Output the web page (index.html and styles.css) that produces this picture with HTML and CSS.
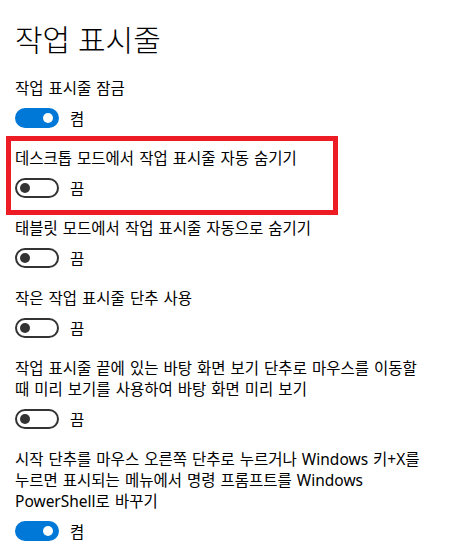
FILE: index.html
```html
<!DOCTYPE html>
<html lang="ko">
<head>
  <meta charset="UTF-8">
  <title>작업 표시줄</title>
  <link rel="stylesheet" href="styles.css">
</head>
<body>

  <main class="page">
    <h1 class="title">작업 표시줄</h1>

    <div class="settings">
      <div class="setting">
        <p class="label">작업 표시줄 잠금</p>
        <div class="switch-row">
          <span class="switch on"><span class="knob"></span></span>
          <span class="state">켬</span>
        </div>
      </div>

      <div class="setting highlight">
        <p class="label">데스크톱 모드에서 작업 표시줄 자동 숨기기</p>
        <div class="switch-row">
          <span class="switch"><span class="knob"></span></span>
          <span class="state">끔</span>
        </div>
      </div>

      <div class="setting">
        <p class="label">태블릿 모드에서 작업 표시줄 자동으로 숨기기</p>
        <div class="switch-row">
          <span class="switch"><span class="knob"></span></span>
          <span class="state">끔</span>
        </div>
      </div>

      <div class="setting">
        <p class="label">작은 작업 표시줄 단추 사용</p>
        <div class="switch-row">
          <span class="switch"><span class="knob"></span></span>
          <span class="state">끔</span>
        </div>
      </div>

      <div class="setting">
        <p class="label">작업 표시줄 끝에 있는 바탕 화면 보기 단추로 마우스를 이동할 때 미리 보기를 사용하여 바탕 화면 미리 보기</p>
        <div class="switch-row">
          <span class="switch"><span class="knob"></span></span>
          <span class="state">끔</span>
        </div>
      </div>

      <div class="setting">
        <p class="label">시작 단추를 마우스 오른쪽 단추로 누르거나 Windows 키+X를 누르면 표시되는 메뉴에서 명령 프롬프트를 Windows PowerShell로 바꾸기</p>
        <div class="switch-row">
          <span class="switch on"><span class="knob"></span></span>
          <span class="state">켬</span>
        </div>
      </div>
    </div>
  </main>

</body>
</html>
```

FILE: styles.css
```css
body { margin: 0; background: #fff; color: #000; font-family: "Noto Sans", "Noto Sans CJK KR", sans-serif; }
.page { width: 415px; padding: 22px 0 20px 15px; }
.title { margin: 0 0 20px; font-size: 30px; line-height: 36px; font-weight: 300; }
.settings { display: flex; flex-direction: column; gap: 20px; }
.setting { display: flex; flex-direction: column; }
.label { margin: 0; font-size: 15.5px; line-height: 21px; word-spacing: 1px; word-break: keep-all; }
.switch-row { display: flex; align-items: center; gap: 11px; margin-top: 9px; height: 20px; font-size: 15.5px; }
.switch { display: flex; align-items: center; box-sizing: border-box; width: 44px; height: 20px; padding: 0 3px; border: 2px solid #333; border-radius: 10px; }
.knob { width: 10px; height: 10px; border-radius: 50%; background: #333; }
.switch.on { justify-content: flex-end; padding: 0 4px; background: #0078d7; border-color: #0078d7; }
.switch.on .knob { background: #fff; }
.highlight { align-self: flex-start; box-sizing: border-box; width: 332px; margin: -12px 0 -17px -9px; padding: 7px 4px 12px; border: 5px solid #ed1c24; }
```
